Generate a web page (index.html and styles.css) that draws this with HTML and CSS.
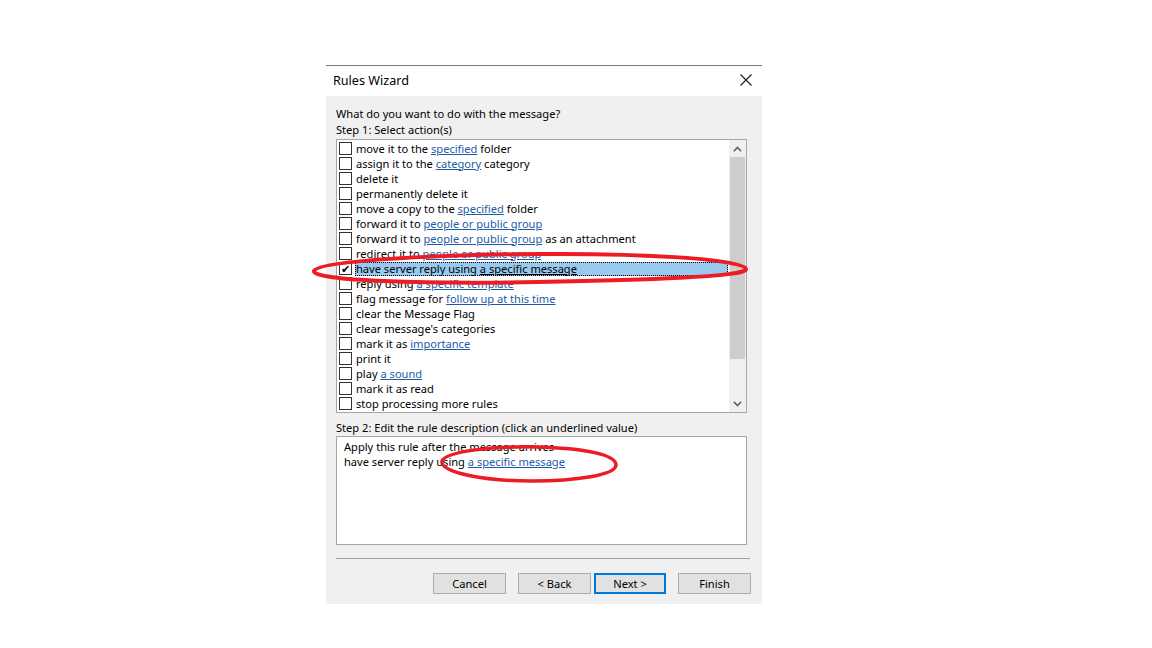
FILE: index.html
```html
<!DOCTYPE html>
<html>
<head>
<meta charset="utf-8">
<link rel="stylesheet" href="styles.css">
</head>
<body>
<div class="dialog">
  <div class="titlebar">
    <span class="title">Rules Wizard</span>
    <svg class="close" width="12" height="12" viewBox="0 0 12 12"><path d="M0.5 0.5 L11.5 11.5 M11.5 0.5 L0.5 11.5" stroke="#1a1a1a" stroke-width="1.1" fill="none"/></svg>
  </div>
  <div class="body">
    <div class="label first">What do you want to do with the message?</div>
    <div class="label">Step 1: Select action(s)</div>
    <div class="listbox">
      <div class="items">
        <div class="row"><span class="cb"></span><span class="txt">move it to the <a>specified</a> folder</span></div>
        <div class="row"><span class="cb"></span><span class="txt">assign it to the <a>category</a> category</span></div>
        <div class="row"><span class="cb"></span><span class="txt">delete it</span></div>
        <div class="row"><span class="cb"></span><span class="txt">permanently delete it</span></div>
        <div class="row"><span class="cb"></span><span class="txt">move a copy to the <a>specified</a> folder</span></div>
        <div class="row"><span class="cb"></span><span class="txt">forward it to <a>people or public group</a></span></div>
        <div class="row"><span class="cb"></span><span class="txt">forward it to <a>people or public group</a> as an attachment</span></div>
        <div class="row"><span class="cb"></span><span class="txt">redirect it to <a>people or public group</a></span></div>
        <div class="row selected"><span class="cb checked">✔</span><span class="txt">have server reply using <a>a specific message</a></span></div>
        <div class="row"><span class="cb"></span><span class="txt">reply using <a>a specific template</a></span></div>
        <div class="row"><span class="cb"></span><span class="txt">flag message for <a>follow up at this time</a></span></div>
        <div class="row"><span class="cb"></span><span class="txt">clear the Message Flag</span></div>
        <div class="row"><span class="cb"></span><span class="txt">clear message's categories</span></div>
        <div class="row"><span class="cb"></span><span class="txt">mark it as <a>importance</a></span></div>
        <div class="row"><span class="cb"></span><span class="txt">print it</span></div>
        <div class="row"><span class="cb"></span><span class="txt">play <a>a sound</a></span></div>
        <div class="row"><span class="cb"></span><span class="txt">mark it as read</span></div>
        <div class="row"><span class="cb"></span><span class="txt">stop processing more rules</span></div>
      </div>
      <div class="scrollbar">
        <div class="sbtn"><svg width="9" height="6" viewBox="0 0 9 6"><path d="M0.8 5.2 L4.5 1.5 L8.2 5.2" stroke="#606060" stroke-width="1.6" fill="none"/></svg></div>
        <div class="thumb"></div>
        <div class="track"></div>
        <div class="sbtn"><svg width="9" height="6" viewBox="0 0 9 6"><path d="M0.8 0.8 L4.5 4.5 L8.2 0.8" stroke="#606060" stroke-width="1.6" fill="none"/></svg></div>
      </div>
    </div>
    <div class="label step2">Step 2: Edit the rule description (click an underlined value)</div>
    <div class="desc">
      <div class="dline">Apply this rule after the message arrives</div>
      <div class="dline">have server reply using <a>a specific message</a></div>
    </div>
    <div class="sep"></div>
    <div class="buttons">
      <button class="btn">Cancel</button>
      <button class="btn back">&lt; Back</button>
      <button class="btn default">Next &gt;</button>
      <button class="btn finish">Finish</button>
    </div>
    <svg class="mark mark1" width="450" height="40" viewBox="0 0 450 40">
      <path d="M6 22 C 10 12, 120 6, 230 5 C 330 4, 436 10, 438 20 C 440 28, 330 31, 230 33 C 120 35, 4 32, 6 22 Z" stroke="#ed1c24" stroke-width="4" fill="none"/>
    </svg>
    <svg class="mark mark2" width="190" height="46" viewBox="0 0 190 46">
      <path d="M6 20 C 10 10, 60 5, 100 6 C 150 7, 180 14, 180 24 C 180 34, 140 40, 96 40 C 50 40, 4 32, 6 20 Z" stroke="#ed1c24" stroke-width="3.5" fill="none"/>
    </svg>
  </div>
</div>
</body>
</html>
```

FILE: styles.css
```css
html, body {
  margin: 0;
  padding: 0;
  background: #ffffff;
}
body {
  font-family: "Noto Sans", "Open Sans", sans-serif;
  font-size: 11.1px;
  color: #000000;
}
.dialog {
  margin-left: 326px;
  margin-top: 65px;
  width: 436px;
  border-top: 1px solid #7a7a7a;
}
.titlebar {
  height: 30px;
  box-sizing: border-box;
  background: #ffffff;
  display: flex;
  align-items: center;
  justify-content: space-between;
  padding: 0 10px 2px 7px;
}
.title {
  font-size: 12.6px;
  color: #000;
}
.close {
  display: block;
}
.body {
  position: relative;
  background: #f0f0f0;
  height: 508px;
  padding: 10px 0 0 10px;
  box-sizing: border-box;
}
.label {
  height: 16px;
  line-height: 16px;
}
.listbox {
  margin-top: 1px;
  width: 411px;
  height: 274px;
  box-sizing: border-box;
  border: 1px solid #a6a6a6;
  background: #ffffff;
  display: flex;
}
.items {
  flex: 1;
  padding-top: 1px;
  padding-left: 2px;
  padding-right: 1px;
}
.row {
  height: 15px;
  display: flex;
  align-items: center;
}
.cb {
  width: 11px;
  height: 11px;
  border: 1px solid #333333;
  background: #fff;
  box-sizing: content-box;
  flex: none;
  font-size: 11px;
  line-height: 11px;
  text-align: center;
  color: #000;
}
.txt {
  margin-left: 3px;
  padding: 0 1px;
  height: 14px;
  line-height: 14px;
  white-space: nowrap;
}
.selected .txt {
  flex: 1;
  background: #99c9ef;
  outline: 1px dotted #000;
  outline-offset: -1px;
}
a {
  color: #1e5ba8;
  text-decoration: underline;
}
.selected a {
  color: #000;
}
.scrollbar {
  width: 17px;
  background: #f0f0f0;
  display: flex;
  flex-direction: column;
}
.sbtn {
  height: 17px;
  display: flex;
  align-items: center;
  justify-content: center;
  flex: none;
}
.thumb {
  height: 202px;
  background: #cdcdcd;
  margin: 0 1px;
  flex: none;
}
.track {
  flex: 1;
}
.step2 {
  margin-top: 7px;
}
.desc {
  width: 411px;
  height: 109px;
  box-sizing: border-box;
  border: 1px solid #a6a6a6;
  background: #fff;
  padding: 2px 0 0 7px;
}
.dline {
  height: 15px;
  line-height: 15px;
}
.sep {
  margin-top: 13px;
  width: 414px;
  height: 1px;
  background: #a0a0a0;
}
.buttons {
  display: flex;
  margin-top: 14px;
  padding-left: 97px;
}
.btn {
  width: 73px;
  height: 21px;
  box-sizing: border-box;
  background: #e1e1e1;
  border: 1px solid #adadad;
  font-family: "Noto Sans", "Open Sans", sans-serif;
  font-size: 11.1px;
  color: #000;
  padding: 0;
  margin: 0;
}
.back {
  margin-left: 12px;
}
.default {
  margin-left: 3px;
  width: 72px;
  border: 2px solid #0078d7;
}
.finish {
  margin-left: 12px;
}
.mark {
  position: absolute;
  overflow: visible;
}
.mark1 {
  left: -18px;
  top: 153px;
}
.mark2 {
  left: 110px;
  top: 345px;
}
```
